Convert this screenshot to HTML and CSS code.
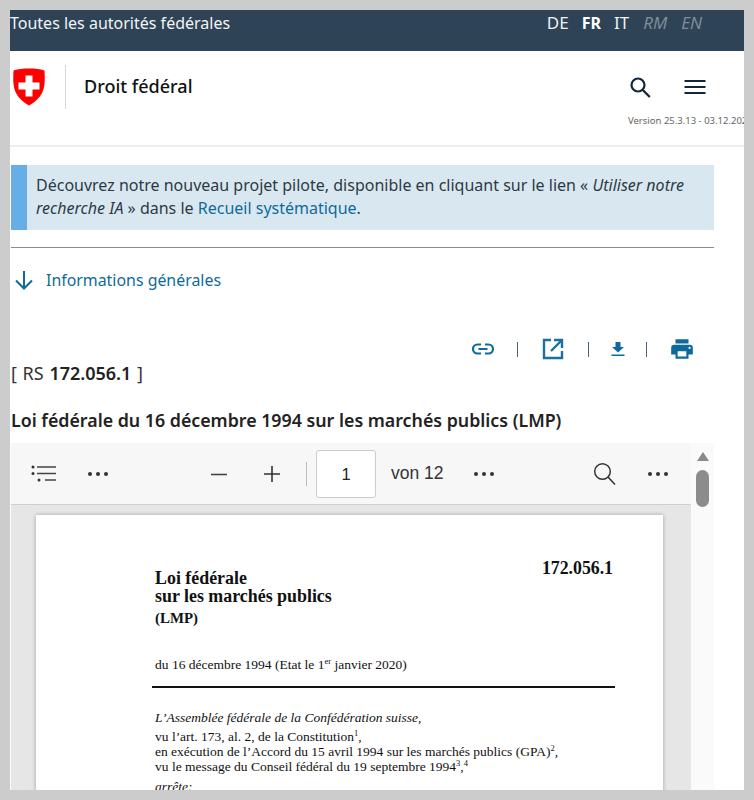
FILE: index.html
```html
<!DOCTYPE html>
<html lang="fr">
<head>
<meta charset="utf-8">
<title>Droit fédéral</title>
<link rel="stylesheet" href="styles.css">
</head>
<body>
<div class="frame">
  <div class="topbar">
    <span class="topbar-title">Toutes les autorités fédérales</span>
    <nav class="langs">
      <span>DE</span><span class="active">FR</span><span>IT</span><span class="off">RM</span><span class="off">EN</span>
    </nav>
  </div>
  <header class="header">
    <svg class="shield" width="34" height="38" viewBox="0 0 34 38"><path d="M1.5 2.5C6 1.2 11 .6 17 .6s11 .6 15.500 1.900C33 12 33 19 30 25c-2.500 5-7.500 9.500-13 12.400C11.500 34.500 6.500 30 4 25 1 19 1 12 1.500 2.500z" fill="#f00"/><path d="M13.500 7.500h7v7h7v7h-7v7h-7v-7h-7v-7h7z" fill="#fff"/></svg>
    <div class="brand">Droit fédéral</div>
    <div class="header-right">
      <div class="header-icons">
        <svg width="24" height="24" viewBox="0 0 24 24"><circle cx="9" cy="10" r="6.500" fill="none" stroke="#13263a" stroke-width="2.200"/><path d="M13.800 15l7 7" stroke="#13263a" stroke-width="2.400" fill="none"/></svg>
        <svg width="24" height="24" viewBox="0 0 24 24"><path d="M1.500 6h21M1.500 12h21M1.500 18h21" stroke="#13263a" stroke-width="2" fill="none"/></svg>
      </div>
      <div class="version">Version 25.3.13 - 03.12.2025</div>
    </div>
  </header>
  <main class="content">
    <div class="alert">Découvrez notre nouveau projet pilote, disponible en cliquant sur le lien « <em>Utiliser notre recherche IA</em> » dans le <a href="#">Recueil systématique</a>.</div>
    <hr class="rule">
    <div class="info">
      <svg width="20" height="20" viewBox="0 0 20 20"><path d="M10 1v17M2 10.500l8 8 8-8" fill="none" stroke="#0f6a9c" stroke-width="2"/></svg>
      <a href="#">Informations générales</a>
    </div>
    <div class="actions">
      <svg width="24" height="24" viewBox="0 0 24 24"><path d="M10 7.500H6.500a4.500 4.500 0 0 0 0 9H10M14 7.500h3.500a4.500 4.500 0 0 1 0 9H14M7.500 12h9" fill="none" stroke="#0f6a9c" stroke-width="2.200"/></svg>
      <span class="sep sep-a"></span>
      <svg width="24" height="24" viewBox="0 0 24 24"><path d="M10 3H3v18h18v-7M13 3h8v8M21 3L10 14" fill="none" stroke="#1a6fa3" stroke-width="2.400"/></svg>
      <span class="sep sep-b"></span>
      <svg width="24" height="24" viewBox="0 0 24 24"><path d="M9.500 5h5v5h3.500L12 15.500 6 10h3.500zM5.500 17.500h13V19h-13z" fill="#0f6a9c"/></svg>
      <span class="sep sep-c"></span>
      <svg width="26" height="26" viewBox="0 0 24 24"><path d="M19 8H5a3 3 0 0 0-3 3v6h4v4h12v-4h4v-6a3 3 0 0 0-3-3zm-3 11H8v-5h8zm3-7a1 1 0 1 1 0-2 1 1 0 0 1 0 2zM18 3H6v4h12z" fill="#0f6a9c"/></svg>
    </div>
    <div class="rs">[ RS <strong>172.056.1</strong> ]</div>
    <h1 class="law-title">Loi fédérale du 16 décembre 1994 sur les marchés publics (LMP)</h1>
    <div class="viewer">
      <div class="viewer-main">
        <div class="toolbar">
          <svg class="tool-list" width="26" height="20" viewBox="0 0 26 20"><path d="M6 3h19M6 9.500h19M14 16h11" stroke="#444" stroke-width="1.500"/><circle cx="2" cy="3" r="1.500" fill="#333"/><circle cx="2" cy="9.500" r="1.500" fill="#333"/><circle cx="8" cy="16" r="1.500" fill="#333"/></svg>
          <span class="dots"><i></i><i></i><i></i></span>
          <svg class="tool-minus" width="18" height="18" viewBox="0 0 18 18"><path d="M1 9.500h16" stroke="#444" stroke-width="1.600"/></svg>
          <svg class="tool-plus" width="18" height="18" viewBox="0 0 18 18"><path d="M1 9h16M9 1v16" stroke="#333" stroke-width="1.600"/></svg>
          <span class="tool-sep"></span>
          <span class="page-box">1</span>
          <span class="page-total">von 12</span>
          <span class="dots"><i></i><i></i><i></i></span>
          <svg class="tool-search" width="24" height="24" viewBox="0 0 24 24"><circle cx="9.500" cy="9.500" r="7.800" fill="none" stroke="#333" stroke-width="1.500"/><path d="M15 15l7 7.500" stroke="#333" stroke-width="1.600"/></svg>
          <span class="dots"><i></i><i></i><i></i></span>
        </div>
        <div class="doc-area">
          <article class="doc-page">
            <div class="doc-head">
              <div class="doc-title">Loi fédérale<br>sur les marchés publics<div class="doc-abbr">(LMP)</div></div>
              <div class="doc-num">172.056.1</div>
            </div>
            <p class="doc-date">du 16 décembre 1994 (Etat le 1<sup>er</sup> janvier 2020)</p>
            <div class="doc-rule"></div>
            <p class="doc-assembly"><em>L’Assemblée fédérale de la Confédération suisse,</em></p>
            <p class="doc-body">vu l’art. 173, al. 2, de la Constitution<sup>1</sup>,<br>en exécution de l’Accord du 15 avril 1994 sur les marchés publics (GPA)<sup>2</sup>,<br>vu le message du Conseil fédéral du 19 septembre 1994<sup>3</sup>,<sup>4</sup></p>
            <p class="doc-arrete"><em>arrête:</em></p>
          </article>
        </div>
      </div>
      <div class="scrollbar">
        <span class="scroll-arrow"></span>
        <span class="scroll-thumb"></span>
      </div>
    </div>
  </main>
</div>
</body>
</html>
```

FILE: styles.css
```css
* { box-sizing: border-box; }
html, body { margin: 0; height: 100%; }
body {
  width: 754px;
  height: 800px;
  padding: 10px;
  background: #cccccc;
  overflow: hidden;
  font-family: "Noto Sans", "Open Sans", sans-serif;
  color: #222;
}
.frame { width: 734px; height: 780px; background: #fff; overflow: hidden; }

.topbar {
  height: 41px;
  background: #2f4356;
  color: #fff;
  display: flex;
  justify-content: space-between;
  padding: 2px 42px 0 0;
  font-size: 16px;
  line-height: 22px;
}
.topbar-title { color: #f2f4f6; }
.langs { display: flex; gap: 13px; font-size: 17px; }
.langs span { color: #eef1f4; }
.langs .active { font-weight: 700; font-size: 16px; color: #fff; }
.langs .off { font-style: italic; color: #7f8c99; margin-left: 1px; }

.header {
  height: 96px;
  border-bottom: 2px solid #eee;
  display: flex;
  align-items: flex-start;
  padding-top: 14px;
}
.shield { margin: 3px 0 0 2px; flex: none; width: 34px; height: 38px; }
.brand {
  margin-left: 19px;
  height: 44px;
  padding-left: 18px;
  border-left: 1px solid #d6d6d6;
  font-size: 18px;
  font-weight: 500;
  color: #111;
  line-height: 43px;
}
.header-right { margin-left: auto; width: 116px; display: flex; flex-direction: column; align-items: flex-start; }
.header-icons { display: flex; gap: 30px; padding: 10px 0 0 1px; }
.version { font-size: 9.500px; color: #666; white-space: nowrap; margin-top: 16px; line-height: 12px; }

.content { padding: 18px 0 0 1px; }
.alert {
  width: 703px;
  height: 65px;
  background: #d9e8f0;
  border-left: 16px solid #66aee6;
  padding: 9px 10px 0 9px;
  font-size: 16px;
  line-height: 23px;
  color: #2d3a45;
}
.alert a, .info a { color: #0f6a9c; text-decoration: none; }
.rule { width: 703px; height: 1px; margin: 17px 0 0; border: 0; background: #8c8c8c; }
.info {
  display: flex;
  align-items: center;
  gap: 12px;
  margin: 22px 0 0 3px;
  font-size: 15.900px;
  line-height: 20px;
}
.actions {
  width: 684px;
  margin-top: 46px;
  height: 26px;
  display: flex;
  align-items: center;
  justify-content: flex-end;
}
.actions svg { flex: none; }
.sep { width: 1px; height: 15px; background: #47627a; flex: none; }
.sep-a { margin: 0 23px 0 22px; }
.sep-b { margin: 0 17px 0 23px; }
.sep-c { margin: 0 22px 0 16px; }
.rs { margin-top: 0; font-size: 18px; line-height: 22px; word-spacing: 1px; color: #333; }
.rs strong { font-weight: 600; color: #222; }
.law-title {
  margin: 24px 0 0;
  font-size: 17.800px;
  line-height: 24px;
  font-weight: 600;
  color: #222;
}

.viewer { display: flex; margin-top: 11px; width: 703px; height: 347px; }
.viewer-main { width: 680px; display: flex; flex-direction: column; }
.toolbar {
  height: 62px;
  background: #f7f7f7;
  border-bottom: 1px solid #cfcfcf;
  display: flex;
  align-items: center;
  padding: 0 0 0 20px;
  flex: none;
}
.dots { display: inline-flex; gap: 4px; }
.dots i { width: 4px; height: 4px; border-radius: 50%; background: #333; display: block; }
.tool-list + .dots { margin-left: 31px; }
.tool-minus { margin-left: 102px; }
.tool-plus { margin-left: 35px; }
.tool-sep { width: 1px; height: 24px; background: #bbb; margin-left: 25px; }
.page-box {
  width: 60px;
  height: 48px;
  margin-left: 9px;
  background: #fff;
  border: 1px solid #ccc;
  border-radius: 3px;
  font-size: 16.500px;
  font-family: "Liberation Sans", sans-serif;
  line-height: 46px;
  text-align: center;
  color: #222;
}
.page-total { margin-left: 15px; font-family: "Liberation Sans", sans-serif; font-size: 17.500px; color: #333; }
.page-total + .dots { margin-left: 30px; }
.tool-search { margin-left: 99px; }
.tool-search + .dots { margin-left: 31px; }

.doc-area {
  flex: 1;
  background: #e6e6e6;
  padding: 10px 28px 0 25px;
  overflow: hidden;
}
.doc-page {
  width: 627px;
  height: 400px;
  background: #fff;
  box-shadow: 0 0 4px rgba(0,0,0,.3);
  padding: 44px 50px 0 119px;
  font-family: "Liberation Serif", serif;
  color: #111;
  font-size: 13.500px;
  line-height: 15px;
}
.doc-head { display: flex; justify-content: space-between; align-items: flex-start; }
.doc-title { font-weight: 700; font-size: 17.900px; line-height: 18px; margin-top: 10px; }
.doc-abbr { font-size: 14.900px; line-height: 18px; margin-top: 4px; }
.doc-num { font-weight: 700; font-size: 17.800px; line-height: 18px; }
.doc-date { margin: 30px 0 0; }
sup { font-size: 8.500px; line-height: 0; }
.doc-rule { height: 2px; width: 463px; margin: 14px 0 0 -3px; background: #111; }
.doc-assembly { margin: 22px 0 0; }
.doc-body { margin: 4px 0 0; }
.doc-arrete { margin: 5px 0 0; }

.scrollbar {
  width: 23px;
  background: #fafafa;
  padding-top: 9px;
  display: flex;
  flex-direction: column;
  align-items: flex-start;
  gap: 9px;
}
.scroll-arrow {
  margin-left: 6px;
  width: 0;
  height: 0;
  border-left: 6px solid transparent;
  border-right: 6px solid transparent;
  border-bottom: 9px solid #8a8a8a;
}
.scroll-thumb { margin-left: 5px; width: 13px; height: 37px; border-radius: 7px; background: #8c8c8c; }
```
